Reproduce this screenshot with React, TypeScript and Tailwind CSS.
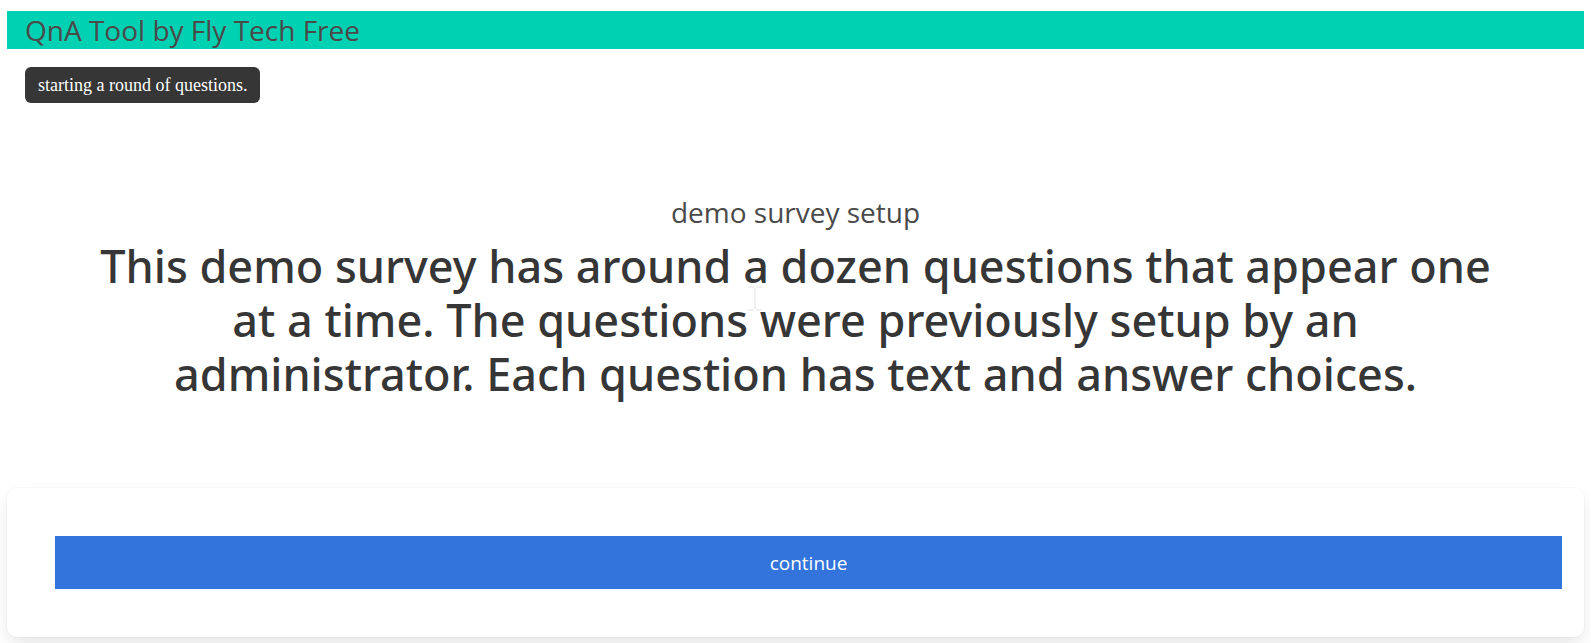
export default function App() {
  return (
    <div className="bg-white px-[7px] pt-[11px] pb-1.5 font-['Open_Sans',sans-serif] text-[#4a4a4a]">
      <header className="bg-[#00d1b2] px-[18px]">
        <h1 className="text-[28px] leading-[38px]">QnA Tool by Fly Tech Free</h1>
      </header>

      <main>
        <div className="flex px-[18px] pt-[18px]">
          <p className="rounded-md bg-[#363636] px-[13px] font-['Liberation_Serif',serif] text-lg leading-9 text-white">
            starting a round of questions.
          </p>
        </div>

        <section className="px-[72px] pt-[90px] pb-[87px] text-center">
          <p className="text-[28px] leading-[38px]">demo survey setup</p>
          <div className="relative pt-2">
            <h2 className="font-['Noto_Sans',sans-serif] text-[45px] leading-[54px] font-medium text-[#363636]">
              This demo survey has around a dozen questions that appear one at a time. The questions were
              previously setup by an administrator. Each question has text and answer choices.
            </h2>
            <svg
              className="pointer-events-none absolute top-[55px] left-[calc(50%-48px)] h-[25px] w-[14px]"
              viewBox="0 0 14 25"
              fill="none"
              stroke="#f0f0f0"
              strokeWidth="2"
              aria-hidden="true"
            >
              <path d="M0 1h6M8 1h6M7 2v21M0 24h6M8 24h6" />
            </svg>
          </div>
        </section>

        <div className="rounded-[10px] bg-white py-12 pr-[22px] pl-12 shadow-[0_9px_18px_-2px_rgba(10,10,10,0.1),0_0_0_1px_rgba(10,10,10,0.02)]">
          <button type="button" className="block w-full bg-[#3273dc] pt-0.5 text-[19px] leading-[51px] text-white">
            continue
          </button>
        </div>
      </main>
    </div>
  );
}
